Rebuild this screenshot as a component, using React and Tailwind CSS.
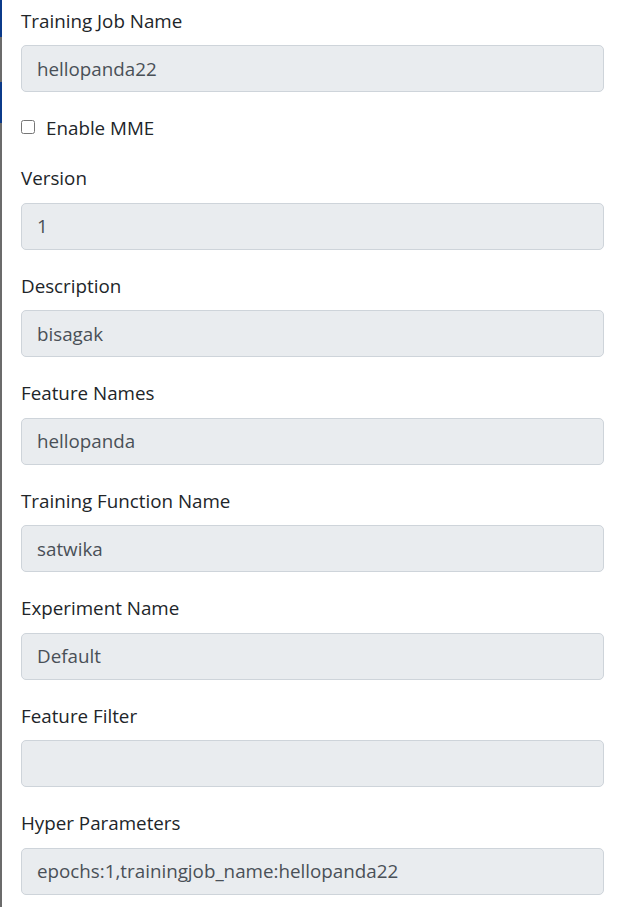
const fields = [
  { label: 'Version', value: '1' },
  { label: 'Description', value: 'bisagak' },
  { label: 'Feature Names', value: 'hellopanda' },
  { label: 'Training Function Name', value: 'satwika' },
  { label: 'Experiment Name', value: 'Default' },
  { label: 'Feature Filter', value: '' },
  { label: 'Hyper Parameters', value: 'epochs:1,trainingjob_name:hellopanda22' },
]

function Field({ label, value }) {
  return (
    <div className="mb-[22px]">
      <label className="block h-[29px] leading-[29px] text-[18.8px] text-[#212529] mb-[9.5px]">{label}</label>
      <input
        type="text"
        value={value}
        disabled
        readOnly
        className="block w-full h-[47px] px-[15px] text-[18.8px] text-[#495057] bg-[#e9ecef] border border-[#ced4da] rounded-[5px]"
      />
    </div>
  )
}

export default function App() {
  return (
    <div className="flex min-h-[907px] bg-white" style={{ fontFamily: '"Open Sans", "Noto Sans", sans-serif' }}>
      <div className="flex flex-col w-[2px] shrink-0">
        <div className="h-[37px] bg-[#0b3a8a]" />
        <div className="h-[45px] bg-[#6b6b6b]" />
        <div className="h-[41px] bg-[#0b3a8a]" />
        <div className="flex-1 bg-[#6b6b6b]" />
      </div>
      <form className="flex-1 pl-[19px] pr-[18px] pt-[6.5px]">
        <Field label="Training Job Name" value="hellopanda22" />
        <div className="flex items-center h-[28px] mb-[22px]">
          <input type="checkbox" className="w-[14px] h-[14px] m-0 mr-[11px] -mt-[3px]" />
          <span className="text-[18.8px] text-[#212529]">Enable MME</span>
        </div>
        {fields.map((f) => (
          <Field key={f.label} label={f.label} value={f.value} />
        ))}
      </form>
    </div>
  )
}
